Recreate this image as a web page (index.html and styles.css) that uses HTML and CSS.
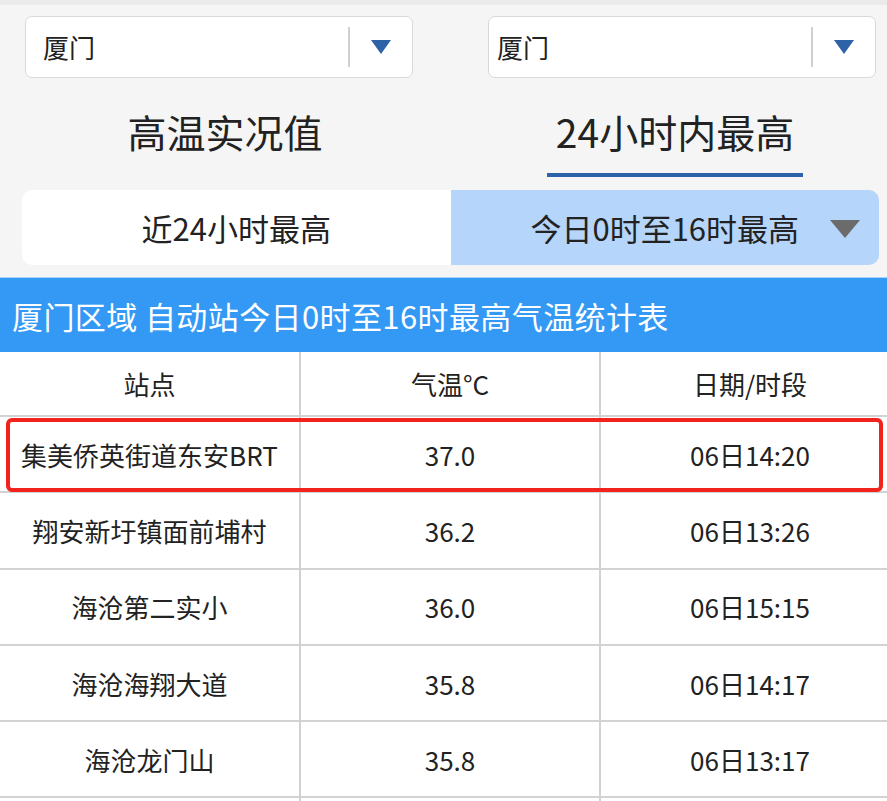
FILE: index.html
```html
<!DOCTYPE html>
<html lang="zh-CN">
<head>
  <meta charset="UTF-8">
  <title>高温实况值</title>
  <link rel="stylesheet" href="styles.css">
</head>
<body>
  <div class="page">
    <div class="top-strip"></div>

    <div class="selects">
      <div class="select">
        <span class="select-text">厦门</span>
        <span class="select-divider"></span>
        <span class="select-arrow"></span>
      </div>
      <div class="select">
        <span class="select-text">厦门</span>
        <span class="select-divider"></span>
        <span class="select-arrow"></span>
      </div>
    </div>

    <div class="tabs">
      <div class="tab">高温实况值</div>
      <div class="tab active">24小时内最高</div>
    </div>

    <div class="segment">
      <div class="seg-item">近24小时最高</div>
      <div class="seg-item current">今日0时至16时最高<span class="seg-arrow"></span></div>
    </div>

    <div class="table-title">厦门区域 自动站今日0时至16时最高气温统计表</div>

    <div class="table-wrap">
      <table class="stats">
        <thead>
          <tr>
            <th>站点</th>
            <th>气温°C</th>
            <th>日期/时段</th>
          </tr>
        </thead>
        <tbody>
          <tr>
            <td class="name">集美侨英街道东安BRT</td>
            <td>37.0</td>
            <td>06日14:20</td>
          </tr>
          <tr>
            <td class="name">翔安新圩镇面前埔村</td>
            <td>36.2</td>
            <td>06日13:26</td>
          </tr>
          <tr>
            <td class="name">海沧第二实小</td>
            <td>36.0</td>
            <td>06日15:15</td>
          </tr>
          <tr>
            <td class="name">海沧海翔大道</td>
            <td>35.8</td>
            <td>06日14:17</td>
          </tr>
          <tr>
            <td class="name">海沧龙门山</td>
            <td>35.8</td>
            <td>06日13:17</td>
          </tr>
          <tr>
            <td></td>
            <td></td>
            <td></td>
          </tr>
        </tbody>
      </table>
      <div class="highlight"></div>
    </div>
  </div>
</body>
</html>
```

FILE: styles.css
```css
body {
  margin: 0;
  background: #f5f5f5;
  font-family: "Noto Sans CJK SC", "Noto Sans", sans-serif;
  color: #222;
  overflow: hidden;
}

.page {
  width: 900px;
}

.top-strip {
  height: 5px;
  background: #ebebeb;
}

.selects {
  display: grid;
  grid-template-columns: 388px 388px;
  column-gap: 75px;
  padding: 11px 0 0 25px;
}

.select {
  height: 60px;
  display: flex;
  align-items: center;
  background: #fff;
  border: 1px solid #d9d9d9;
  border-radius: 7px;
}

.select-text {
  flex: 1;
  padding-left: 17px;
  font-size: 26px;
  line-height: 1;
}

.select + .select .select-text {
  padding-left: 8px;
}

.select-divider {
  width: 2px;
  height: 40px;
  background: #d0d0d0;
}

.select-arrow {
  width: 0;
  height: 0;
  margin: 0 21px 0 21px;
  border-left: 10px solid transparent;
  border-right: 10px solid transparent;
  border-top: 14px solid #2d62a6;
}

.tabs {
  display: grid;
  grid-template-columns: 450px 450px;
  height: 101px;
}

.tab {
  display: flex;
  justify-content: center;
  align-items: center;
  font-size: 39px;
  padding-top: 4px;
}

.tab.active {
  position: relative;
}

.tab.active::after {
  content: "";
  position: absolute;
  left: 97px;
  width: 256px;
  bottom: 2px;
  height: 4px;
  background: #2b62a8;
}

.segment {
  display: grid;
  grid-template-columns: 1fr 1fr;
  margin: 11px 21px 0 22px;
  height: 75px;
  border-radius: 10px;
  overflow: hidden;
}

.seg-item {
  display: flex;
  justify-content: center;
  align-items: center;
  font-size: 31px;
  background: #fff;
}

.seg-item.current {
  position: relative;
  background: #b5d5fb;
}

.seg-arrow {
  position: absolute;
  right: 19px;
  top: 30px;
  width: 0;
  height: 0;
  border-left: 15px solid transparent;
  border-right: 15px solid transparent;
  border-top: 18px solid #6b6b6b;
}

.table-title {
  margin-top: 12px;
  height: 75px;
  display: flex;
  align-items: center;
  padding-left: 12px;
  background: #3399f5;
  border-top: 1px solid #a9d3fb;
  box-sizing: border-box;
  color: #fff;
  font-size: 31px;
  letter-spacing: 0.4px;
}

.table-wrap {
  position: relative;
  background: #fff;
}

.stats {
  width: 901px;
  border-collapse: collapse;
  table-layout: fixed;
}

.stats th,
.stats td {
  border: 2px solid #d2d2d2;
  text-align: center;
  font-size: 26px;
  font-weight: normal;
  padding: 0;
}

.stats tr > :first-child {
  border-left: none;
}

.stats thead tr:first-child th {
  border-top: none;
}

.stats th {
  height: 63px;
}

.stats td {
  height: 74.3px;
}

.stats td.name {
  white-space: nowrap;
}

.highlight {
  position: absolute;
  left: 6px;
  top: 66px;
  width: 869px;
  height: 66px;
  border: 4px solid #f2231d;
  border-radius: 6px;
}
```
